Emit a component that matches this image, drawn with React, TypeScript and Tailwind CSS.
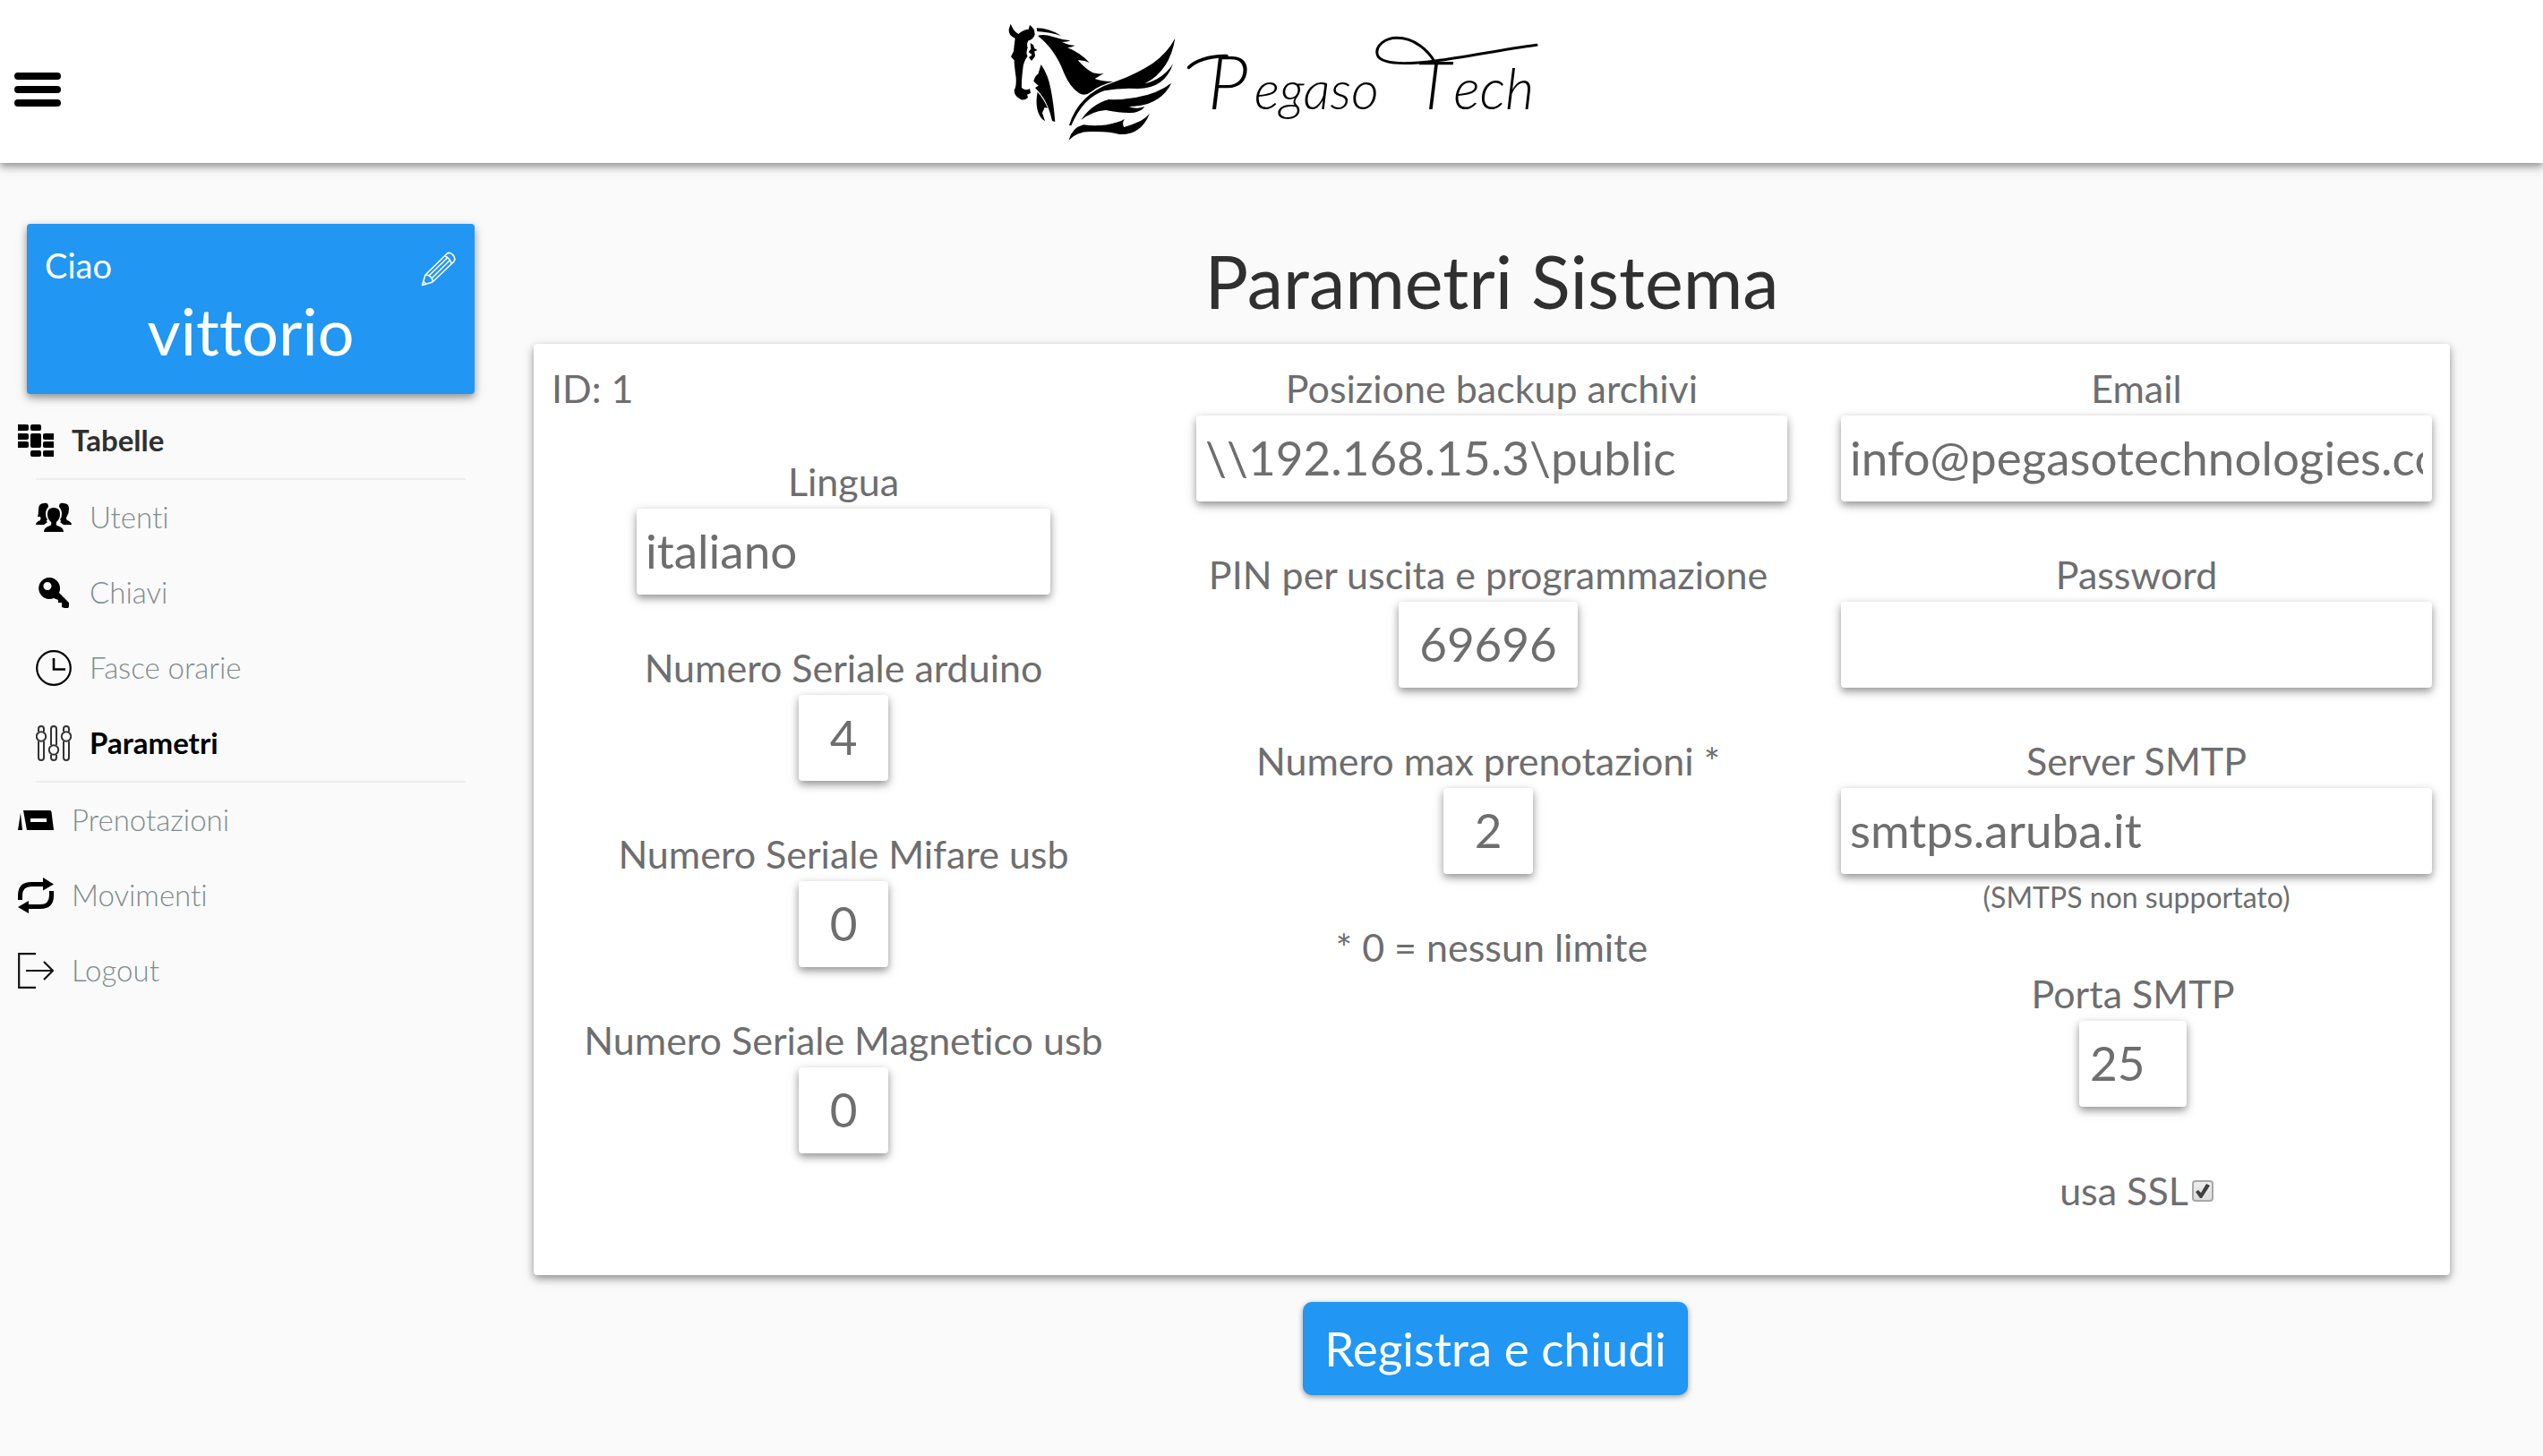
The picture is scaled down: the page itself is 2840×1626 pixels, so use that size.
import { useId } from "react"
import type { ReactNode } from "react"
import clsx from "clsx"

interface MenuEntry {
  label: string
  icon: ReactNode
  active?: boolean
}

interface FieldProps {
  label: string
  value: string
  type?: string
  width?: string
  align?: string
  className?: string
  note?: string
}

const cardShadow = "shadow-[0_4px_8px_rgba(0,0,0,0.36),0_4px_16px_rgba(0,0,0,0.1)]"

function Logo() {
  return (
    <svg viewBox="0 0 1860 480" className="h-40 w-[620px]" role="img" aria-label="Pegaso Tech">
      {/* head */}
      <path d="M56 50L66 70Q74 80 82 84Q96 70 116 68L120 54Q138 66 137 86Q132 102 116 106Q108 116 113 130Q106 150 113 158Q99 175 97 200Q92 240 93 264Q106 276 120 267L123 282L111 287L114 297Q99 311 85 300Q68 290 68 272Q76 260 74 230Q68 190 68 172L57 160L66 142Q68 120 71 98Q48 88 50 68Z" />
      <path d="M122 114L132 121L136 132L146 138L136 142L138 158L126 174L117 162L128 154L116 144L124 134Z" />
      {/* neck */}
      <path d="M158 186Q182 222 190 266Q200 315 205 378L195 375Q184 325 165 297Q152 278 138 264L149 257L133 242Q138 222 148 218Z" />
      <path d="M146 278Q166 300 180 332L170 330L162 348L171 376Q152 365 145 335Q140 310 146 278Z" />
      {/* mane */}
      <path d="M143 64Q185 64 226 90Q190 78 145 75Z" />
      <path d="M147 90Q165 82 200 94Q230 104 256 106Q240 112 228 110Q250 122 272 122Q258 130 246 129Q292 148 320 180Q300 170 281 172Q308 202 332 214Q350 219 368 216Q350 226 338 234Q365 244 400 243Q350 257 325 278Q304 294 285 282Q255 262 235 215Q205 135 147 90Z" />
      {/* wing */}
      <path d="M607 98Q582 146 532 182Q474 220 400 246Q284 284 252 390L259 391Q300 296 370 274Q420 264 480 267Q572 268 600 184Q566 236 506 250Q590 206 607 98Z" />
      <path d="M595 248Q540 290 450 300Q420 305 385 303Q326 320 292 372Q330 342 375 339Q430 350 470 347Q496 342 505 327Q476 337 452 327Q556 326 595 248Z" />
      <path d="M522 350Q500 378 436 396Q428 386 437 369Q425 378 410 380Q360 396 300 388Q262 398 250 440Q280 408 330 411Q390 410 420 420Q492 424 522 350Z" />
      <g className="font-['Lato',sans-serif] font-light italic">
        <text x="716" y="335" fontSize="250">P</text>
        <text x="872" y="335" fontSize="180">egaso</text>
        <text x="1412" y="335" fontSize="224">T</text>
        <text x="1540" y="335" fontSize="188">ech</text>
      </g>
      {/* flourishes */}
      <g fill="none" stroke="#000" strokeWidth="9" strokeLinecap="round">
        <path d="M653 196C672 176 720 156 780 158" strokeWidth="11" />
        <path d="M1818 121C1700 136 1580 162 1480 174C1400 184 1300 190 1285 155C1275 120 1315 97 1350 97C1410 97 1455 140 1476 176" />
      </g>
    </svg>
  )
}

function PencilIcon() {
  return (
    <svg viewBox="0 0 40 40" className="size-10" fill="none" stroke="#fff" strokeWidth="1.6" strokeLinejoin="round">
      <path d="M1.5 38.5L5 27L29 3.5C32-.5 41 7 36.500 12.500L13 35ZM5 27C9 26 14 31 13 35M26.500 6C29 6 34 10.500 34 14.500M9 28L29.500 8M12 31L32 11M3 34.500L6 37" />
    </svg>
  )
}

function TablesIcon() {
  return (
    <svg viewBox="0 0 40 40" className="size-10">
      <rect x="-3" y="2" width="15" height="7" rx="2" />
      <rect x="14" y="2" width="12" height="7" rx="2" />
      <rect x="-3" y="12" width="15" height="7" rx="2" />
      <rect x="14" y="12" width="12" height="16" rx="2" />
      <rect x="28" y="12" width="15" height="7" rx="2" />
      <rect x="-3" y="21" width="15" height="7" rx="2" />
      <rect x="28" y="21" width="15" height="7" rx="2" />
      <rect x="14" y="31" width="12" height="7" rx="2" />
      <rect x="28" y="31" width="15" height="7" rx="2" />
    </svg>
  )
}

function UsersIcon() {
  return (
    <svg viewBox="0 0 40 40" className="size-10">
      <path d="M9 4Q14 3 14 8Q11 11 11 16Q11 20 13 22Q11 24 13 25L9 28H0Q0 25 5 23Q6 21 5 19H2Q3 16 3 11Q3 4 9 4Z" />
      <path d="M31 4Q26 3 26 8Q29 11 29 16Q29 20 27 22Q29 24 27 25L31 28H40Q40 25 35 23Q33 21 35 18Q37 15 37 10Q37 4 31 4Z" />
      <path d="M20 9Q27 9 27 16Q27 22 23 25Q22 28 24 29Q31 31 31 36H9Q9 31 16 29Q18 28 17 25Q13 22 13 16Q13 9 20 9Z" />
    </svg>
  )
}

function KeyIcon() {
  return (
    <svg viewBox="0 0 40 40" className="size-10">
      <path fillRule="evenodd" d="M15 3A12 12 0 1 0 20 26L25 28V31H29V36L32 37H36Q37 37 37 34V31L26 20A12 12 0 0 0 15 3ZM13 8A4.500 4.500 0 1 1 12.900 8Z" />
    </svg>
  )
}

function ClockIcon() {
  return (
    <svg viewBox="0 0 40 40" className="size-10" fill="none" stroke="#000" strokeWidth="2.200">
      <circle cx="20" cy="20" r="18.800" />
      <path d="M20 9V21.500H33" strokeWidth="2.600" />
    </svg>
  )
}

function SlidersIcon() {
  return (
    <svg viewBox="0 0 40 40" className="size-10" fill="none" stroke="#333" strokeWidth="2">
      <path d="M3 7V4a3 3 0 0 1 6 0V7M3 18V36a3 3 0 0 0 6 0V18" />
      <circle cx="6" cy="12.500" r="5.200" />
      <path d="M17 22V4a3 3 0 0 1 6 0V22M17 33V36a3 3 0 0 0 6 0V33" />
      <circle cx="20" cy="27.500" r="5.200" />
      <path d="M31 7V4a3 3 0 0 1 6 0V7M31 18V36a3 3 0 0 0 6 0V18" />
      <circle cx="34" cy="12.500" r="5.200" />
    </svg>
  )
}

function BookingIcon() {
  return (
    <svg viewBox="0 0 40 40" className="size-10">
      <path d="M3 12L5 31H0Z" />
      <path fillRule="evenodd" d="M6 9H36Q37 9 37.500 11L40 31H10ZM14 18V22H32V18Z" />
    </svg>
  )
}

function MovementsIcon() {
  return (
    <svg viewBox="0 0 40 40" className="size-10">
      <path d="M2.500 25V20Q2.500 7.500 15 7.500H29M37.500 15V20Q37.500 32.500 25 32.500H11" fill="none" stroke="#000" strokeWidth="5" />
      <path d="M28 0L40 7.500L28 14.500ZM12 26L0 33L12 40Z" />
    </svg>
  )
}

function LogoutIcon() {
  return (
    <svg viewBox="0 0 40 40" className="size-10" fill="none" stroke="#111" strokeWidth="2.200">
      <path d="M20 1.200H1.200V38.800H20M9 20H39M29 10L39 20L29 30" />
    </svg>
  )
}

function MenuLink({ entry }: { entry: MenuEntry }) {
  return (
    <a
      href="#"
      className={clsx(
        "flex h-[84px] items-center gap-5",
        entry.active ? "font-bold text-black" : "font-light text-[#7f8c8d]"
      )}
    >
      {entry.icon}
      {entry.label}
    </a>
  )
}

const tableEntries: MenuEntry[] = [
  { label: "Utenti", icon: <UsersIcon /> },
  { label: "Chiavi", icon: <KeyIcon /> },
  { label: "Fasce orarie", icon: <ClockIcon /> },
  { label: "Parametri", icon: <SlidersIcon />, active: true },
]

const otherEntries: MenuEntry[] = [
  { label: "Prenotazioni", icon: <BookingIcon /> },
  { label: "Movimenti", icon: <MovementsIcon /> },
  { label: "Logout", icon: <LogoutIcon /> },
]

function Field({ label, value, type = "text", width = "w-full", align = "text-left px-[10px]", className, note }: FieldProps) {
  const id = useId()
  return (
    <div className={clsx("flex flex-col items-center", className)}>
      <label htmlFor={id} className="mb-1 leading-[52px]">
        {label}
      </label>
      <input
        id={id}
        type={type}
        defaultValue={value}
        className={clsx("h-24 rounded bg-white pb-1 text-[53px]", cardShadow, width, align)}
      />
      {note && <small className="text-[32px] leading-[52px]">{note}</small>}
    </div>
  )
}

export default function App() {
  return (
    <div className="min-h-screen bg-[#fafafa] font-['Lato',sans-serif] text-[#303030] [font-variant-ligatures:none]">
      <header className={clsx("relative grid grid-cols-[1fr_auto_1fr] items-center bg-white pt-[10px] pb-3", cardShadow)}>
        <button type="button" aria-label="Menu" className="mt-5 ml-4 w-[52px]">
          <svg viewBox="0 0 52 38" className="block w-full">
            <rect width="52" height="8" rx="4" />
            <rect y="15" width="52" height="8" rx="4" />
            <rect y="30" width="52" height="8" rx="4" />
          </svg>
        </button>
        <Logo />
      </header>

      <div className="flex">
        <aside className="w-[560px] shrink-0 px-5 pt-[68px] text-[33px]">
          <div className={clsx("mx-[10px] mb-[10px] h-[190px] rounded bg-[#2196f3] px-5 pt-[22px] text-white", cardShadow)}>
            <div className="flex items-start justify-between">
              <span className="text-[38px] leading-[48px]">Ciao</span>
              <button type="button" aria-label="Modifica utente" className="mt-2">
                <PencilIcon />
              </button>
            </div>
            <div className="text-center text-[72px] leading-[98px]">vittorio</div>
          </div>

          <nav>
            <a href="#" className="flex h-[84px] items-center gap-5 font-bold">
              <TablesIcon />
              Tabelle
            </a>
            <div className="mr-5 ml-5 border-y-2 border-[#eee]">
              {tableEntries.map((entry) => (
                <MenuLink key={entry.label} entry={entry} />
              ))}
            </div>
            {otherEntries.map((entry) => (
              <MenuLink key={entry.label} entry={entry} />
            ))}
          </nav>
        </aside>

        <main className="flex-1 pt-[84px] pr-26 pb-16 pl-9">
          <h1 className="mb-[22px] text-center text-[81px] leading-[96px]">Parametri Sistema</h1>

          <form onSubmit={(e) => e.preventDefault()}>
            <div className={clsx("grid grid-cols-3 rounded bg-white px-5 pt-6 pb-[68px] text-[43px] text-[#6e6e6e]", cardShadow)}>
              <div className="flex flex-col gap-14 pr-12">
                <p className="-mb-1 leading-[52px]">ID: 1</p>
                <Field label="Lingua" value="italiano" width="w-[462px]" />
                <Field label="Numero Seriale arduino" value="4" width="w-25" align="text-center" />
                <Field label="Numero Seriale Mifare usb" value="0" width="w-25" align="text-center" />
                <Field label="Numero Seriale Magnetico usb" value="0" width="w-25" align="text-center" />
              </div>

              <div className="flex flex-col gap-14 px-5">
                <Field label="Posizione backup archivi" value={"\\\\192.168.15.3\\public"} />
                <Field label="PIN per uscita e programmazione" value="69696" width="w-50" align="text-center" className="pr-2" />
                <Field label="Numero max prenotazioni *" value="2" width="w-25" align="text-center" className="pr-2" />
                <p className="text-center leading-[52px]">* 0 = nessun limite</p>
              </div>

              <div className="flex flex-col gap-14 pl-10">
                <Field label="Email" value="info@pegasotechnologies.com" />
                <Field label="Password" value="" type="password" />
                <Field label="Server SMTP" value="smtps.aruba.it" note="(SMTPS non supportato)" />
                <Field label="Porta SMTP" value="25" width="w-30" align="text-left px-3" className="pr-2" />
                <label className="mt-3 flex items-center justify-center gap-1 leading-[52px]">
                  usa SSL
                  <span className="grid size-6 place-items-center">
                    <input
                      type="checkbox"
                      defaultChecked
                      className="peer size-6 appearance-none rounded border-2 border-[#a8a8a8] bg-linear-to-b from-[#eee] to-[#dcdcdc] [grid-area:1/1]"
                    />
                    <svg viewBox="0 0 18 18" className="pointer-events-none invisible size-[18px] [grid-area:1/1] peer-checked:visible">
                      <path d="M1 10L4 8L7 11L13 1L17 3L8 17H6Z" fill="#404040" />
                    </svg>
                  </span>
                </label>
              </div>
            </div>

            <div className="mt-[30px] pl-2 text-center">
              <button
                type="submit"
                className="rounded-[10px] bg-[#2196f3] px-6 py-5 text-[53px] leading-[64px] text-white shadow-[0_2px_6px_rgba(0,0,0,0.4)]"
              >
                Registra e chiudi
              </button>
            </div>
          </form>
        </main>
      </div>
    </div>
  )
}
